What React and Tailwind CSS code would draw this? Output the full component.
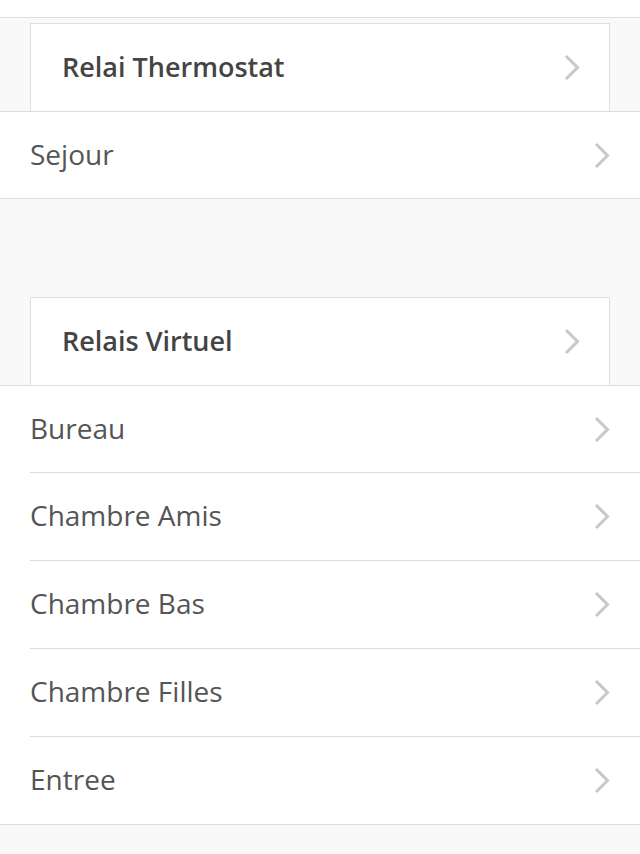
import React from 'react';

const Chevron = () => (
  <svg width="16" height="27" viewBox="0 0 16 27" fill="none">
    <polyline points="2,2 13.5,13.5 2,25" stroke="#c7c7cc" strokeWidth="3" />
  </svg>
);

const Header = ({ title }) => (
  <div className="mx-[30px] h-[88px] bg-white border-x border-t border-[#dddddd] flex items-center justify-between pl-[31px] pr-[29px]">
    <span className="text-[27px] font-semibold text-[#444444]">{title}</span>
    <Chevron />
  </div>
);

// row heights are tuned so the separators land on the screenshot's lines
const Row = ({ label, height, last }) => (
  <div className={`${height} ml-[30px] flex items-center justify-between pr-[30px] ${last ? '' : 'border-b border-[#dddddd]'}`}>
    <span className="text-[28px] text-[#555555] mb-[3px]">{label}</span>
    <Chevron />
  </div>
);

const Section = ({ title, rooms }) => (
  <div>
    <Header title={title} />
    <div className="bg-white border-y border-[#dddddd]">
      {rooms.map((r, i) => {
        const last = i === rooms.length - 1;
        let height = 'h-[88px]';
        if (i === 0 && last) height = 'h-[86px]';
        else if (i === 0 || last) height = 'h-[87px]';
        return <Row key={r} label={r} height={height} last={last} />;
      })}
    </div>
  </div>
);

export default function App() {
  return (
    <div className="w-[640px] h-[854px] bg-[#f9f9f9] overflow-hidden" style={{ fontFamily: '"Open Sans", sans-serif' }}>
      <div className="h-[18px] bg-white border-b border-[#dddddd]" />
      <div className="pt-[5px]">
        <Section title="Relai Thermostat" rooms={['Sejour']} />
      </div>
      <div className="pt-[98px]">
        <Section
          title="Relais Virtuel"
          rooms={['Bureau', 'Chambre Amis', 'Chambre Bas', 'Chambre Filles', 'Entree']}
        />
      </div>
    </div>
  );
}
